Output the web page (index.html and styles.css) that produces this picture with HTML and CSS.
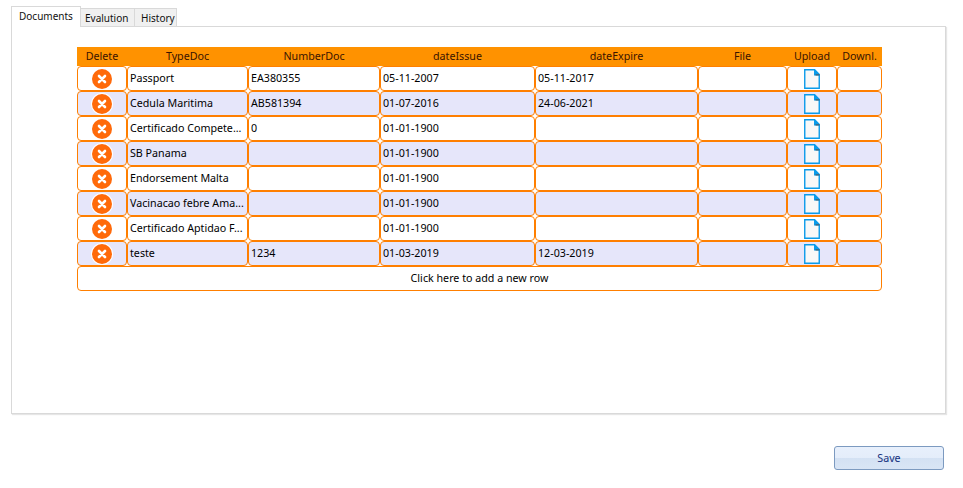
FILE: index.html
```html
<!DOCTYPE html>
<html lang="en">
<head>
<meta charset="utf-8">
<title>Documents</title>
<link rel="stylesheet" href="styles.css">
</head>
<body>
<svg class="defs" width="0" height="0" aria-hidden="true">
  <symbol id="del" viewBox="0 0 22 22">
    <circle cx="11" cy="11" r="10" fill="#ff6a0a"/>
    <path d="M8 8l6 6M14 8l-6 6" stroke="#fff" stroke-width="2.6" stroke-linecap="round"/>
  </symbol>
  <symbol id="doc" viewBox="0 0 16 20">
    <path d="M.75.75H10.5L15.25 5.5V19.25H.75Z" fill="#f8f8f8" stroke="#0a9bea" stroke-width="1.4"/>
    <path d="M10 .5H11L15.5 5V6.5H10Z" fill="#0a9bea"/>
    <path d="M11.5 5.2H15.5V6.5H11.5Z" fill="#46606e"/>
  </symbol>
</svg>
<main class="window">
  <nav class="tabs">
    <div class="tab active">Documents</div>
    <div class="tab">Evalution</div>
    <div class="tab">History</div>
  </nav>
  <section class="panel">
    <div class="grid">
      <div class="row head">
        <div>Delete</div><div>TypeDoc</div><div>NumberDoc</div><div>dateIssue</div><div>dateExpire</div><div>File</div><div>Upload</div><div>Downl.</div>
      </div>
      <div class="row">
        <div class="cell icon"><svg class="del"><use href="#del"/></svg></div><div class="cell">Passport</div><div class="cell">EA380355</div><div class="cell">05-11-2007</div><div class="cell">05-11-2017</div><div class="cell"></div><div class="cell icon"><svg class="doc"><use href="#doc"/></svg></div><div class="cell"></div>
      </div>
      <div class="row alt">
        <div class="cell icon"><svg class="del"><use href="#del"/></svg></div><div class="cell">Cedula Maritima</div><div class="cell">AB581394</div><div class="cell">01-07-2016</div><div class="cell">24-06-2021</div><div class="cell"></div><div class="cell icon"><svg class="doc"><use href="#doc"/></svg></div><div class="cell"></div>
      </div>
      <div class="row">
        <div class="cell icon"><svg class="del"><use href="#del"/></svg></div><div class="cell">Certificado Compete...</div><div class="cell">0</div><div class="cell">01-01-1900</div><div class="cell"></div><div class="cell"></div><div class="cell icon"><svg class="doc"><use href="#doc"/></svg></div><div class="cell"></div>
      </div>
      <div class="row alt">
        <div class="cell icon"><svg class="del"><use href="#del"/></svg></div><div class="cell">SB Panama</div><div class="cell"></div><div class="cell">01-01-1900</div><div class="cell"></div><div class="cell"></div><div class="cell icon"><svg class="doc"><use href="#doc"/></svg></div><div class="cell"></div>
      </div>
      <div class="row">
        <div class="cell icon"><svg class="del"><use href="#del"/></svg></div><div class="cell">Endorsement Malta</div><div class="cell"></div><div class="cell">01-01-1900</div><div class="cell"></div><div class="cell"></div><div class="cell icon"><svg class="doc"><use href="#doc"/></svg></div><div class="cell"></div>
      </div>
      <div class="row alt">
        <div class="cell icon"><svg class="del"><use href="#del"/></svg></div><div class="cell">Vacinacao febre Ama...</div><div class="cell"></div><div class="cell">01-01-1900</div><div class="cell"></div><div class="cell"></div><div class="cell icon"><svg class="doc"><use href="#doc"/></svg></div><div class="cell"></div>
      </div>
      <div class="row">
        <div class="cell icon"><svg class="del"><use href="#del"/></svg></div><div class="cell">Certificado Aptidao F...</div><div class="cell"></div><div class="cell">01-01-1900</div><div class="cell"></div><div class="cell"></div><div class="cell icon"><svg class="doc"><use href="#doc"/></svg></div><div class="cell"></div>
      </div>
      <div class="row alt">
        <div class="cell icon"><svg class="del"><use href="#del"/></svg></div><div class="cell">teste</div><div class="cell">1234</div><div class="cell">01-03-2019</div><div class="cell">12-03-2019</div><div class="cell"></div><div class="cell icon"><svg class="doc"><use href="#doc"/></svg></div><div class="cell"></div>
      </div>
      <div class="cell add">Click here to add a new row</div>
    </div>
  </section>
  <footer class="actions">
    <button class="save" type="button">Save</button>
  </footer>
</main>
</body>
</html>
```
FILE: styles.css
```css
* { box-sizing: border-box; }
html, body { margin: 0; height: 100%; background: #fff; overflow: hidden; }
body { font: 10.7px/14px "Noto Sans", "DejaVu Sans", sans-serif; color: #000; }
.defs { position: absolute; }
.window { width: 963px; height: 488px; padding: 6px 17px 0 11px; }
.tabs { display: flex; height: 21px; align-items: flex-end; position: relative; z-index: 1; font-size: 10px; }
.tab {
  height: 19px; padding: 2px 0 0 4px; background: #f0f0f0;
  border: 1px solid #d9d9d9; border-left: 0; color: #111;
}
.tab.active {
  height: 21px; width: 70px; padding: 2px 0 0 7px;
  background: #fff; border: 1px solid #d9d9d9; border-bottom: 0;
}
.tab:nth-child(2) { width: 54px; }
.tab:nth-child(3) { width: 42px; padding-left: 6px; }
.panel {
  height: 388px; margin-top: -1px; padding: 20px 0 0 65px; background: #fff;
  border: 1px solid #d9d9d9; box-shadow: 1px 1px 1px #e6e6e6;
}
.grid { width: 805px; }
.row { display: grid; grid-template-columns: 50px 121px 132px 155px 163px 89px 50px 45px; height: 25px; }
.head { height: 19px; background: #ff9200; color: #3a1400; text-align: center; line-height: 18px; }
.cell {
  min-width: 0; padding: 3px 0 0 2px; line-height: 17px; white-space: nowrap; overflow: hidden;
  background: #fff; border: 1px solid #ff7f00; border-radius: 4px;
}
.alt .cell { background: #e6e6fa; }
.icon { display: flex; align-items: center; justify-content: center; padding: 0; }
.del { width: 22px; height: 22px; border-radius: 50%; background: #fff; }
.doc { width: 16px; height: 20px; }
.add { height: 25px; padding: 3px 0 0; text-align: center; }
.actions { display: flex; justify-content: flex-end; padding: 32px 2px 0 0; }
.save {
  width: 110px; height: 24px; padding: 0; font: inherit; color: #15317e;
  border: 1px solid #7c9ac0; border-radius: 3px;
  background: linear-gradient(#e8f0fc 0, #e4edfa 48%, #d3e1f3 50%, #d9e5f5 100%);
}
```
